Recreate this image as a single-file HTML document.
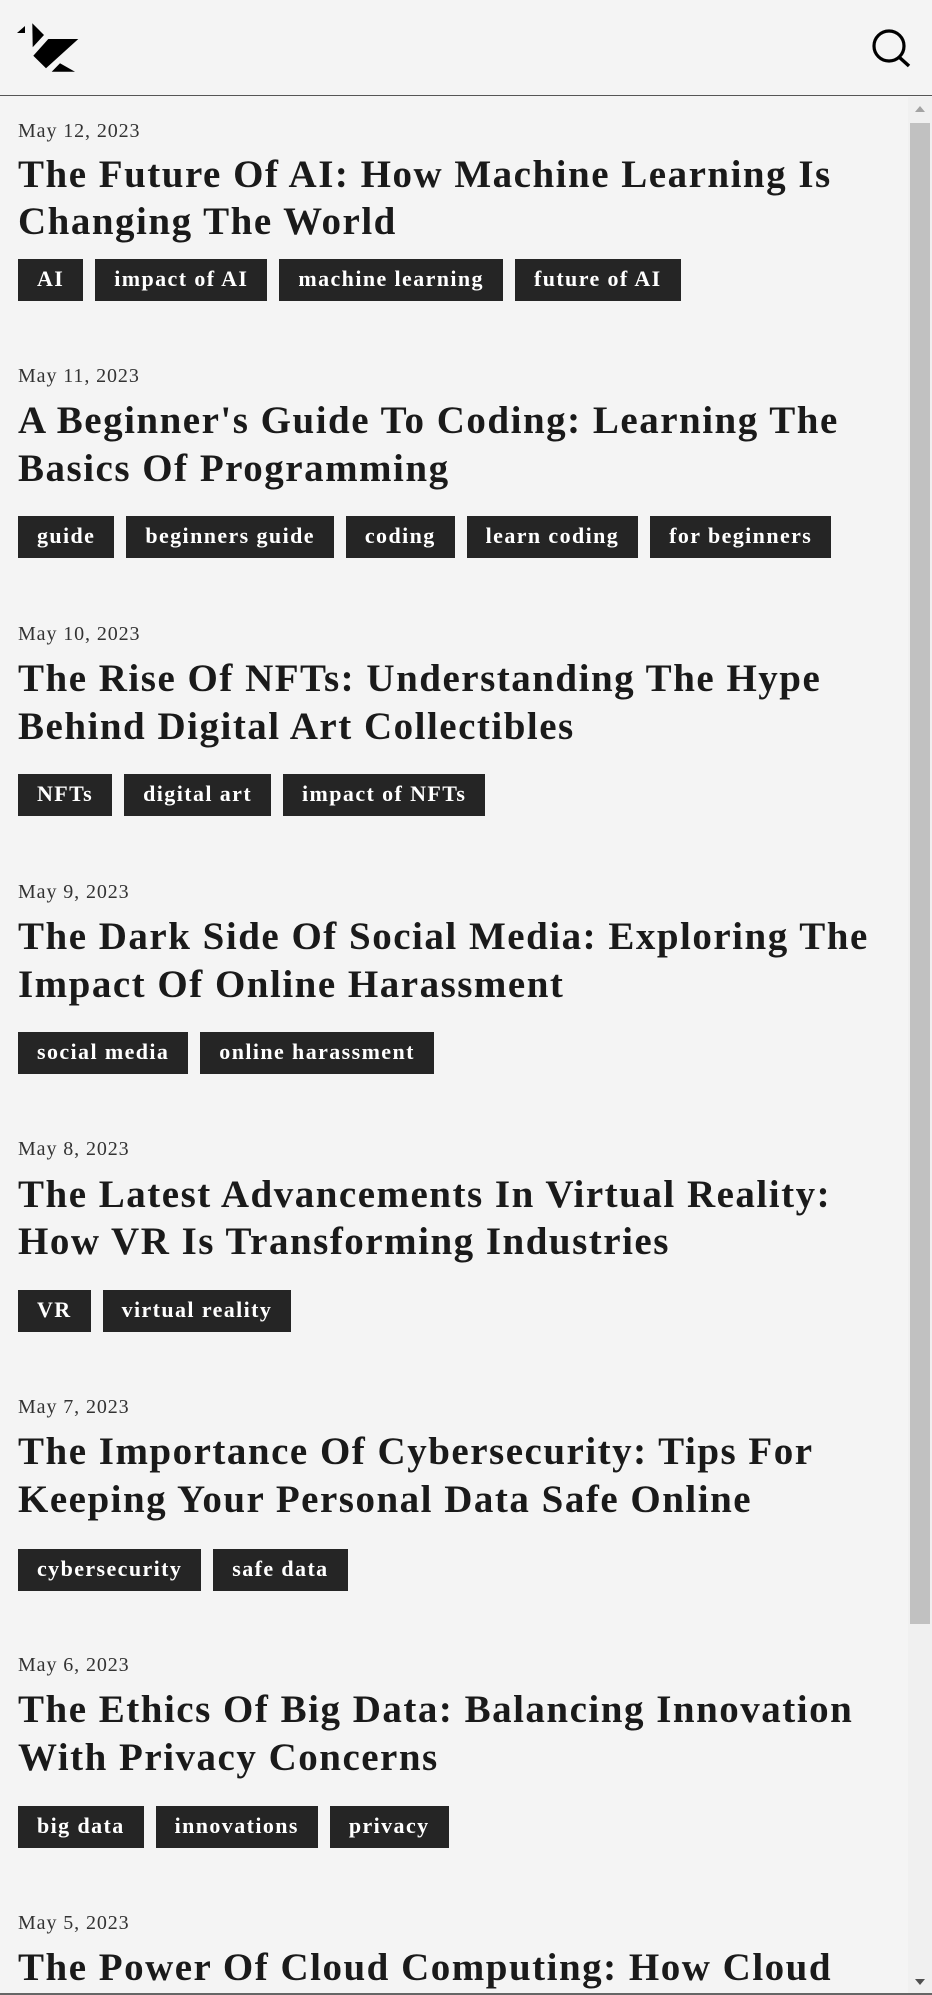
<!DOCTYPE html>
<html><head><meta charset="utf-8">
<style>
*{margin:0;padding:0;box-sizing:border-box}
html,body{width:932px;height:1995px;overflow:hidden;background:#f4f4f4}
body{position:relative;font-family:"Liberation Serif",serif;color:#1a1a1a}
.hdr{position:absolute;left:0;top:0;width:932px;height:96px;border-bottom:1.5px solid #555}
.a{position:absolute;left:18px;width:880px}
.date{position:absolute;left:0;font-size:20px;letter-spacing:0.9px;color:#333;line-height:24px}
.t{position:absolute;left:0;font-size:39px;letter-spacing:1.5px;font-weight:bold;line-height:48px;white-space:nowrap;color:#1a1a1a}
.tags{position:absolute;left:0;display:flex;gap:12px}
.tag{background:#252525;color:#fff;font-weight:bold;font-size:22px;letter-spacing:1.4px;height:42px;line-height:40px;padding:0 19px;white-space:nowrap}
.sb{position:absolute;left:908px;top:97px;width:24px;height:1898px;background:#f0f0f0}
.thumb{position:absolute;left:910px;top:123px;width:20px;height:1501px;background:#c1c1c1}
</style></head><body>
<div class="hdr">
<svg width="100" height="96" style="position:absolute;left:0;top:0">
<polygon points="17,33 25,26 25,33" fill="#000"/>
<polygon points="32.3,23.3 44,35 32.7,47.3" fill="#000"/>
<polygon points="33.3,55.7 48.3,39 78.3,39 46,68.3" fill="#000"/>
<polygon points="51.7,71.7 60,63.3 75,71.7" fill="#000"/>
</svg>
<svg width="60" height="96" style="position:absolute;left:860px;top:0">
<circle cx="29" cy="46" r="15" fill="none" stroke="#000" stroke-width="3.2"/>
<line x1="39" y1="57" x2="49" y2="66" stroke="#000" stroke-width="3.5"/>
</svg>
</div>

<div class="a" style="top:119px">
<div class="date" style="top:0">May 12, 2023</div>
<div class="t" style="top:32px">The Future Of AI: How Machine Learning Is</div>
<div class="t" style="top:79px">Changing The World</div>
<div class="tags" style="top:140px"><span class="tag">AI</span><span class="tag">impact of AI</span><span class="tag">machine learning</span><span class="tag">future of AI</span></div>
</div>

<div class="a" style="top:364px">
<div class="date" style="top:0">May 11, 2023</div>
<div class="t" style="top:33px">A Beginner's Guide To Coding: Learning The</div>
<div class="t" style="top:81px">Basics Of Programming</div>
<div class="tags" style="top:152px"><span class="tag">guide</span><span class="tag">beginners guide</span><span class="tag">coding</span><span class="tag">learn coding</span><span class="tag">for beginners</span></div>
</div>

<div class="a" style="top:622px">
<div class="date" style="top:0">May 10, 2023</div>
<div class="t" style="top:33px">The Rise Of NFTs: Understanding The Hype</div>
<div class="t" style="top:81px">Behind Digital Art Collectibles</div>
<div class="tags" style="top:152px"><span class="tag">NFTs</span><span class="tag">digital art</span><span class="tag">impact of NFTs</span></div>
</div>

<div class="a" style="top:880px">
<div class="date" style="top:0">May 9, 2023</div>
<div class="t" style="top:33px">The Dark Side Of Social Media: Exploring The</div>
<div class="t" style="top:81px">Impact Of Online Harassment</div>
<div class="tags" style="top:152px"><span class="tag">social media</span><span class="tag">online harassment</span></div>
</div>

<div class="a" style="top:1137px">
<div class="date" style="top:0">May 8, 2023</div>
<div class="t" style="top:34px">The Latest Advancements In Virtual Reality:</div>
<div class="t" style="top:81px">How VR Is Transforming Industries</div>
<div class="tags" style="top:153px"><span class="tag">VR</span><span class="tag">virtual reality</span></div>
</div>

<div class="a" style="top:1395px">
<div class="date" style="top:0">May 7, 2023</div>
<div class="t" style="top:33px">The Importance Of Cybersecurity: Tips For</div>
<div class="t" style="top:81px">Keeping Your Personal Data Safe Online</div>
<div class="tags" style="top:154px"><span class="tag">cybersecurity</span><span class="tag">safe data</span></div>
</div>

<div class="a" style="top:1653px">
<div class="date" style="top:0">May 6, 2023</div>
<div class="t" style="top:33px">The Ethics Of Big Data: Balancing Innovation</div>
<div class="t" style="top:81px">With Privacy Concerns</div>
<div class="tags" style="top:153px"><span class="tag">big data</span><span class="tag">innovations</span><span class="tag">privacy</span></div>
</div>

<div class="a" style="top:1911px">
<div class="date" style="top:0">May 5, 2023</div>
<div class="t" style="top:33px">The Power Of Cloud Computing: How Cloud</div>
</div>

<div class="sb"></div>
<div class="thumb"></div>
<svg width="24" height="12" style="position:absolute;left:908px;top:103px"><polygon points="7,9 12,3 17,9" fill="#a3a3a3"/></svg>
<svg width="24" height="12" style="position:absolute;left:908px;top:1976px"><polygon points="7,3 12,9 17,3" fill="#505050"/></svg>
<div style="position:absolute;left:0;top:1993px;width:932px;height:2px;background:#666"></div>
</body></html>
